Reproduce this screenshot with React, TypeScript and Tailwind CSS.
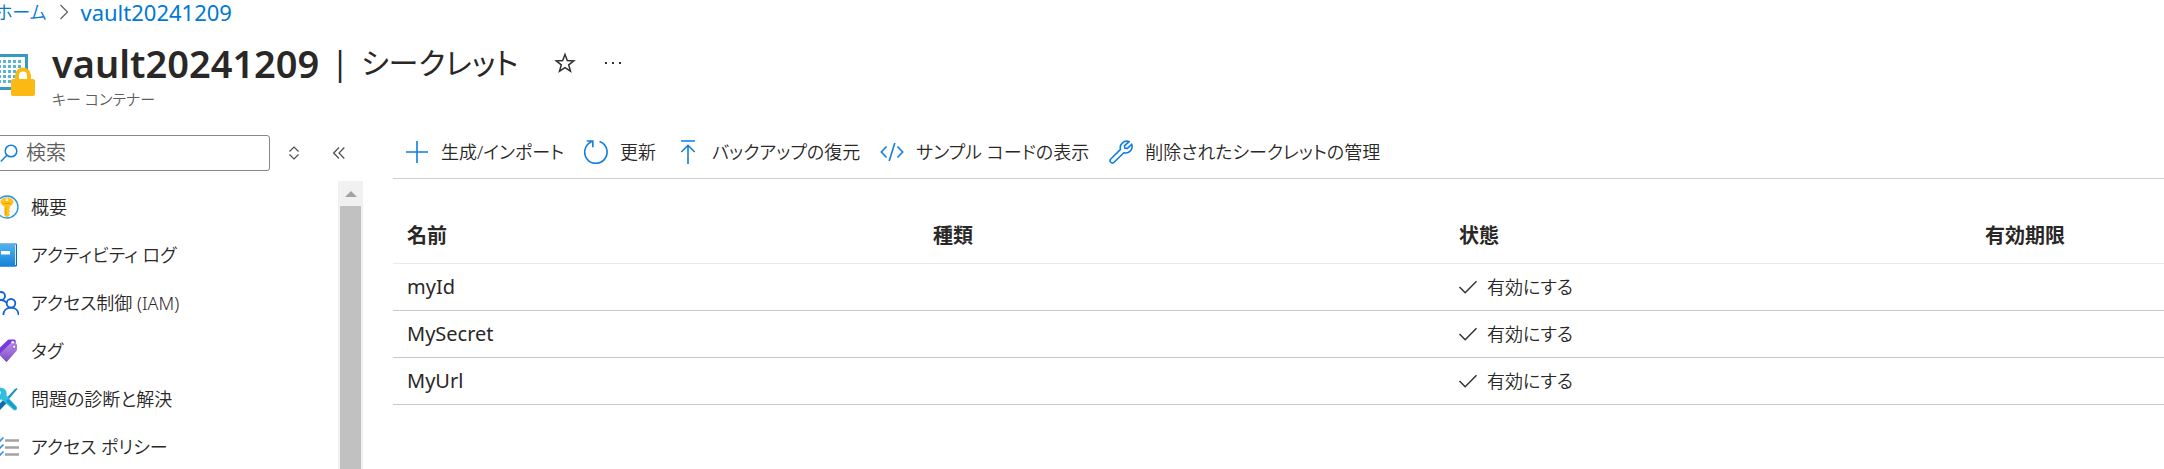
import type { ReactNode } from "react"

function VaultIcon() {
  return (
    <svg viewBox="0 0 46 46" className="h-[46px] w-[46px] shrink-0" aria-hidden="true">
      <rect x="2.5" y="3.5" width="34" height="33" fill="#fff" stroke="#3999c6" strokeWidth="3" />
      <g fill="#59b4d9">
        {[8, 13, 18, 23, 28].map((y) =>
          [8, 13, 18, 23, 28].map((x) => <rect key={`${x}-${y}`} x={x} y={y} width="3" height="3" />)
        )}
      </g>
      <path d="M25 30v-6.500a8 8 0 0 1 16 0V30z" fill="#fdb913" />
      <path d="M29 27v-3.500a4 4 0 0 1 8 0V27z" fill="#fff" />
      <rect x="21" y="27" width="24" height="17" rx="2" fill="#fdb913" />
    </svg>
  )
}

function KeyIcon() {
  return (
    <svg viewBox="0 0 24 24" className="h-6 w-6" aria-hidden="true">
      <circle cx="12" cy="12" r="11" fill="#f3f9fe" stroke="#2a8fdd" strokeWidth="1.300" />
      <path
        d="M12 2.500c-3.600 0-6.500 2-6.500 4.300 0 1.700 2 3.800 3.800 5v8.400l2.700 2.300 2.700-2.300v-1.300l-1-1 1-1v-1.200l-1-1 1-1v-1.900c1.800-1.200 3.800-3.300 3.800-5 0-2.300-2.900-4.300-6.500-4.300z"
        fill="#ffc21a"
      />
      <path d="M10.300 12.500v7.400l1 .8v-8.200z" fill="#ff9300" />
      <path d="M8.500 8.500h7" stroke="#ff9300" strokeWidth="1.200" />
      <circle cx="12" cy="4.800" r="1.300" fill="#fff" />
    </svg>
  )
}

function LogIcon() {
  return (
    <svg viewBox="0 0 24 24" className="h-6 w-6" aria-hidden="true">
      <defs>
        <linearGradient id="log-cover" x1="0" y1="0" x2="0" y2="1">
          <stop offset="0" stopColor="#50b0f0" />
          <stop offset="1" stopColor="#1383d8" />
        </linearGradient>
      </defs>
      <rect x="2" y="0.500" width="20" height="23" rx="1" fill="#0f6cbd" />
      <rect x="3" y="1.500" width="18" height="20.500" fill="#d6ecfb" />
      <rect x="1" y="1.500" width="19" height="22" rx="1" fill="url(#log-cover)" />
      <rect x="6" y="8" width="9" height="3.500" fill="#fff" />
    </svg>
  )
}

function PeopleIcon() {
  return (
    <svg viewBox="0 0 24 24" className="h-6 w-6" fill="none" stroke="#0f62de" strokeWidth="1.800" aria-hidden="true">
      <circle cx="6" cy="5" r="4" />
      <circle cx="16" cy="12.300" r="4.300" />
      <path d="M8.300 24c.3-4.300 3.400-7.300 7.700-7.300s7.400 3 7.700 7.300M0 15.500C.3 11.900 2.800 9 6 9c1.900 0 3.500.8 5.600 2.500" />
    </svg>
  )
}

function TagIcon() {
  return (
    <svg viewBox="0 0 24 24" className="h-6 w-6" aria-hidden="true">
      <defs>
        <linearGradient id="tag-front" x1="0" y1="0" x2="0" y2="1">
          <stop offset="0" stopColor="#b98ae6" />
          <stop offset="1" stopColor="#7a4cc0" />
        </linearGradient>
      </defs>
      <path d="M1 12.500 12.500 1.200c.4-.4.900-.7 1.500-.7h5c1 0 1.700.7 1.700 1.700v5.600L10 18.500z" fill="#773adc" />
      <circle cx="17.800" cy="3.700" r="1.700" fill="#fff" />
      <path d="m4 15.500 11-10.800c.4-.4.800-.5 1.300-.5h3.900c1.100 0 1.800.8 1.800 1.800v4.500c0 .6-.2 1-.6 1.400L11.500 23.300z" fill="url(#tag-front)" />
      <circle cx="19.200" cy="7.700" r="1.700" fill="#fff" stroke="#773adc" strokeWidth="0.800" />
    </svg>
  )
}

function ToolsIcon() {
  return (
    <svg viewBox="0 0 24 24" className="h-6 w-6" aria-hidden="true">
      <path d="M21.500 1 22.500 2 13.500 12.500l-1.800-1.700 8-8.500z" fill="#1b93c4" />
      <path d="m9.500 11.500 3.500 3.300L5 23c-1 .9-2.500.9-3.500 0s-.9-2.300 0-3.200z" fill="#0f6daa" />
      <path
        d="M2.500 1.500 6 5l-1 3-3 .8-3-3C-.8 8.500 0 11 2 12.200c1.500.8 3.200.8 4.600.3L18.300 22.700c.9.900 2.300.9 3.200 0s.9-2.200 0-3.100L11.300 8.200c.8-2 .3-4.300-1.300-5.800C8 .6 5 .3 2.500 1.500z"
        fill="#32bedd"
      />
      <path d="m13 14 6.800 6.800" stroke="#1a9bc4" strokeWidth="3" strokeLinecap="round" />
    </svg>
  )
}

function PolicyIcon() {
  return (
    <svg viewBox="0 0 24 24" className="h-6 w-6" fill="none" aria-hidden="true">
      <path d="M10 5.500h14M10 12.500h14M10 19.500h14" stroke="#a3a3a3" strokeWidth="2.400" />
      <path d="m1 5.500 2.500 2L8.500 2.500M1 12.500l2.500 2 5-5M1 19.500l2.500 2 5-5" stroke="#3b8df0" strokeWidth="1.600" />
    </svg>
  )
}

function CommandIcon({ children }: { children: ReactNode }) {
  return (
    <svg
      viewBox="0 0 24 24"
      className="h-6 w-6 shrink-0"
      fill="none"
      stroke="#0f7fdb"
      strokeWidth="1.600"
      aria-hidden="true"
    >
      {children}
    </svg>
  )
}

const menuItems = [
  { label: "概要", icon: <KeyIcon /> },
  { label: "アクティビティ ログ", icon: <LogIcon /> },
  { label: "アクセス制御 (IAM)", icon: <PeopleIcon /> },
  { label: "タグ", icon: <TagIcon /> },
  { label: "問題の診断と解決", icon: <ToolsIcon /> },
  { label: "アクセス ポリシー", icon: <PolicyIcon /> },
]

const commands = [
  { label: "生成/インポート", icon: <path d="M12 1v22M1 12h22" /> },
  {
    label: "更新",
    icon: <path d="M15.500 1.500a11.200 11.200 0 1 1-8 .3M2.800 1h6v6.200" />,
  },
  { label: "バックアップの復元", icon: <path d="M5 1h14M12 24V5.500M5.300 12 12 5.300l6.700 6.700" /> },
  { label: "サンプル コードの表示", icon: <path d="M6.500 6.500 1.300 12l5.200 5.500M17.500 6.500l5.200 5.500-5.200 5.500M14.800 3 9.200 21" /> },
  {
    label: "削除されたシークレットの管理",
    icon: (
      <path
        d="M20.300 1.700a6.500 6.500 0 0 0-8.800 7.700L1.800 19a2.300 2.300 0 0 0 3.300 3.300l9.700-9.600a6.500 6.500 0 0 0 7.900-8.500l-4.200 4.200-2.700-.3-.3-2.500z"
        strokeLinejoin="round"
      />
    ),
  },
]

const secrets = [
  { name: "myId", type: "", status: "有効にする", expires: "" },
  { name: "MySecret", type: "", status: "有効にする", expires: "" },
  { name: "MyUrl", type: "", status: "有効にする", expires: "" },
]

function Sidebar() {
  return (
    <aside className="flex w-[373px] shrink-0 flex-col pt-[9px]">
      <div className="flex h-9 items-center">
        <label className="flex h-9 w-[280px] items-center gap-2 rounded-[3px] border border-[#8a8886] pl-[9px]">
          <svg viewBox="0 0 18 18" className="h-[18px] w-[18px] shrink-0" fill="none" stroke="#0f7fdb" strokeWidth="1.500" aria-hidden="true">
            <circle cx="11" cy="7" r="5.800" />
            <path d="M7 11.300.8 17.500" />
          </svg>
          <input
            type="search"
            aria-label="検索"
            placeholder="検索"
            className="w-full bg-transparent text-[20px] outline-none placeholder:text-[#605e5c]"
          />
        </label>
        <button type="button" aria-label="並べ替え" className="ml-[18px] flex h-6 w-3">
          <svg viewBox="0 0 12 24" className="h-6 w-3" fill="none" stroke="#504e4c" strokeWidth="1.200">
            <path d="m1.500 10.500 4.500-4.500 4.500 4.500M1.500 13.500 6 18l4.500-4.500" />
          </svg>
        </button>
        <button type="button" aria-label="折りたたむ" className="ml-[33px] flex h-6 w-3">
          <svg viewBox="0 0 12 24" className="h-6 w-3" fill="none" stroke="#504e4c" strokeWidth="1.200">
            <path d="M6 6.500.7 12 6 17.500M11.300 6.500 6 12l5.300 5.500" />
          </svg>
        </button>
      </div>
      <div className="mt-[10px] flex min-h-0 flex-1 justify-between overflow-hidden">
        <nav className="pt-[2px]">
          <ul>
            {menuItems.map((item) => (
              <li key={item.label}>
                <a href="#" className="flex h-12 items-center gap-3 pl-[5px] text-[18px]">
                  {item.icon}
                  {item.label}
                </a>
              </li>
            ))}
          </ul>
        </nav>
        <div className="flex w-[25px] flex-col bg-[#f1f1f1] px-[2px]">
          <div className="flex h-[25px] items-center justify-center">
            <svg viewBox="0 0 12 6" className="h-[6px] w-3" fill="#a3a3a3" aria-hidden="true">
              <path d="M6 0l6 6H0z" />
            </svg>
          </div>
          <div className="flex-1 bg-[#c1c1c1]" />
        </div>
      </div>
    </aside>
  )
}

function SecretsTable() {
  return (
    <table className="mt-[31px] w-full table-fixed border-collapse text-left">
      <thead>
        <tr className="h-[53px] border-b border-[#eaeaea]">
          <th className="w-[29.7%] pl-[14px] font-bold">名前</th>
          <th className="w-[29.7%] pl-[14px] font-bold">種類</th>
          <th className="w-[29.7%] pl-[14px] font-bold">状態</th>
          <th className="pl-[14px] font-bold">有効期限</th>
        </tr>
      </thead>
      <tbody>
        {secrets.map((secret) => (
          <tr key={secret.name} className="h-[47px] border-b border-[#c8c8c8]">
            <td className="pl-[14px] font-normal">{secret.name}</td>
            <td className="pl-[14px]">{secret.type}</td>
            <td className="pl-[14px] text-[18px]">
              <span className="flex items-center gap-[10px]">
                <svg viewBox="0 0 18 18" className="h-[18px] w-[18px]" fill="none" stroke="#323130" strokeWidth="1.500" aria-hidden="true">
                  <path d="m.5 9 5.700 5.700L17.500 3.300" />
                </svg>
                {secret.status}
              </span>
            </td>
            <td className="pl-[14px]">{secret.expires}</td>
          </tr>
        ))}
      </tbody>
    </table>
  )
}

export default function App() {
  return (
    <div
      lang="ja"
      className="h-screen overflow-hidden bg-white font-['Noto_Sans','Noto_Sans_CJK_JP',sans-serif] text-[20px] leading-6 font-[350] text-[#292827] [font-feature-settings:'palt']"
    >
      <div className="-ml-[10px] flex h-full flex-col">
        <nav className="flex h-6 items-center gap-3 pl-[5px] text-[#0078d4]">
          <a href="#" className="text-[18px]">ホーム</a>
          <svg viewBox="0 0 10 16" className="h-4 w-[10px]" fill="none" stroke="#605e5c" strokeWidth="1.200" aria-hidden="true">
            <path d="m1.500 1 7 7-7 7" />
          </svg>
          <a href="#" className="text-[22px] font-normal">vault20241209</a>
        </nav>

        <header className="mt-[14px] flex gap-4">
          <div className="pt-[14px]">
            <VaultIcon />
          </div>
          <div>
            <div className="flex h-[50px] items-center">
              <h1 className="flex items-center gap-3 leading-[50px] font-normal">
                <span className="text-[38px] font-semibold">vault20241209</span>
                <span className="text-[32px]">|</span>
                <span className="text-[30px]">シークレット</span>
              </h1>
              <button type="button" aria-label="お気に入りに追加" className="ml-9">
                <svg viewBox="0 0 22 22" className="h-[22px] w-[22px]" fill="none" stroke="#323130" strokeWidth="1.500">
                  <path d="m11 2.500 2.300 6.100 6.500.3-5.100 4 1.800 6.300L11 15.600l-5.500 3.600 1.800-6.300-5.100-4 6.500-.3z" />
                </svg>
              </button>
              <button type="button" aria-label="その他" className="ml-7">
                <svg viewBox="0 0 18 4" className="h-1 w-[18px]" fill="#323130">
                  <path d="M1 1h2v2H1zM8 1h2v2H8zM15 1h2v2h-2z" />
                </svg>
              </button>
            </div>
            <p className="text-[15px] leading-[22px] text-[#605e5c]">キー コンテナー</p>
          </div>
        </header>

        <div className="mt-4 flex min-h-0 flex-1">
          <Sidebar />
          <main className="ml-[30px] min-w-0 flex-1">
            <div className="flex h-[53px] items-center gap-5 border-b border-[#d2d0ce] pl-3 text-[18px]">
              {commands.map((command) => (
                <button key={command.label} type="button" className="flex items-center gap-3 whitespace-nowrap">
                  <CommandIcon>{command.icon}</CommandIcon>
                  {command.label}
                </button>
              ))}
            </div>
            <SecretsTable />
          </main>
        </div>
      </div>
    </div>
  )
}
